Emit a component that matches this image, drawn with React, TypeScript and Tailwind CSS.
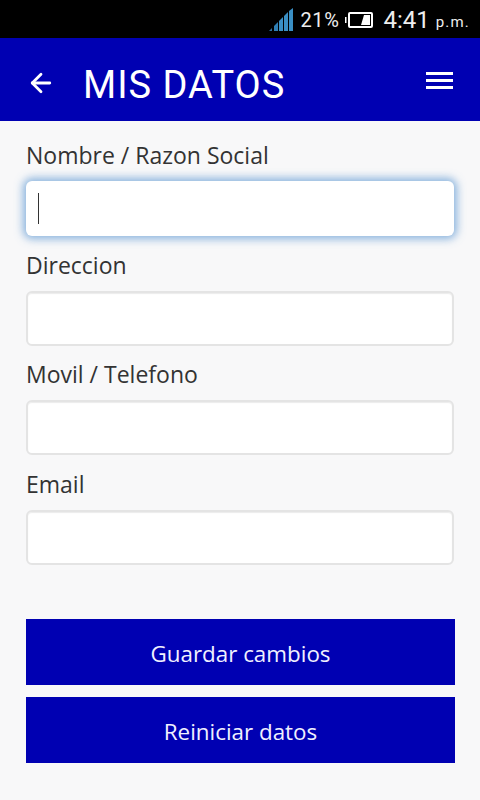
import { ArrowLeft } from 'lucide-react'

const fields = [
  { label: 'Nombre / Razon Social', focused: true },
  { label: 'Direccion' },
  { label: 'Movil / Telefono' },
  { label: 'Email' },
]

export default function App() {
  return (
    <div className="h-[800px] w-[480px] overflow-hidden bg-[#f8f8f9] font-['Open_Sans','Noto_Sans',sans-serif] text-[#333]">
      {/* Status bar */}
      <div className="flex h-[38px] items-center justify-end bg-black pr-[10px] pt-[2px] font-['Roboto',sans-serif] text-[#eee]">
        <svg width="24" height="23" viewBox="0 0 24 23" className="mr-[7px] mb-[2px]">
          <path d="M0 23l3-3v3z" fill="#2f6f9c" />
          <path d="M5 18l4-4v9H5z" fill="#2f7fb4" />
          <path d="M10 13l4-4v14h-4z" fill="#3a8fc4" />
          <path d="M15 8l4-4v19h-4z" fill="#3a8fc4" />
          <path d="M20 3l4-3v23h-4z" fill="#3a8fc4" />
        </svg>
        <span className="text-[20px] tracking-[0.6px]">21%</span>
        <svg width="28" height="16" viewBox="0 0 28 16" className="mr-[10px] ml-[6px]">
          <rect x="0" y="5" width="1.5" height="6" fill="#fff" />
          <rect x="4" y="1" width="23" height="14" rx="1" fill="none" stroke="#fff" strokeWidth="2" />
          <path d="M19 3h6v10h-9z" fill="#fff" />
        </svg>
        <span className="text-[24px]">4:41</span>
        <span className="ml-[6px] pt-[4px] text-[15px] tracking-[1.2px]">p.m.</span>
      </div>

      {/* Header */}
      <div className="flex h-[83px] items-center bg-[#0000b2] text-white">
        <ArrowLeft className="ml-[26px] mt-[7px] h-[30px] w-[30px]" strokeWidth={2.25} />
        <h1 className="ml-[27px] mt-[10px] font-['Roboto',sans-serif] text-[38px] leading-none tracking-[1px]">MIS DATOS</h1>
        <div className="ml-auto mr-[27px] mt-[1px] flex w-[27px] flex-col gap-[4px]">
          <div className="h-[3px] bg-white" />
          <div className="h-[3px] bg-white" />
          <div className="h-[3px] bg-white" />
        </div>
      </div>

      {/* Form */}
      <div className="flex flex-col px-[26px] pt-[18px]">
        <div className="flex flex-col gap-[12.5px]">
          {fields.map((field) => (
            <div key={field.label} className="flex flex-col">
              <label className="mb-[10px] text-[23px] leading-[32px]">{field.label}</label>
              {field.focused ? (
                <div className="flex h-[55px] w-[428px] items-center rounded-[6px] bg-white pl-[12px] shadow-[0_0_8px_3px_rgba(90,150,210,0.7)]">
                  <div className="h-[31px] w-px bg-[#333]" />
                </div>
              ) : (
                <div className="h-[55px] w-[428px] rounded-[6px] border-2 border-[#e4e4e4] bg-white shadow-[inset_0_1px_1px_rgba(0,0,0,0.08)]" />
              )}
            </div>
          ))}
        </div>

        <button className="mt-[54.5px] h-[66px] w-[429px] bg-[#0000b2] pt-[4px] text-[22.4px] text-[#f0f0ff]">Guardar cambios</button>
        <button className="mt-[12px] h-[66px] w-[429px] bg-[#0000b2] pt-[4px] text-[22.4px] text-[#f0f0ff]">Reiniciar datos</button>
      </div>
    </div>
  )
}
